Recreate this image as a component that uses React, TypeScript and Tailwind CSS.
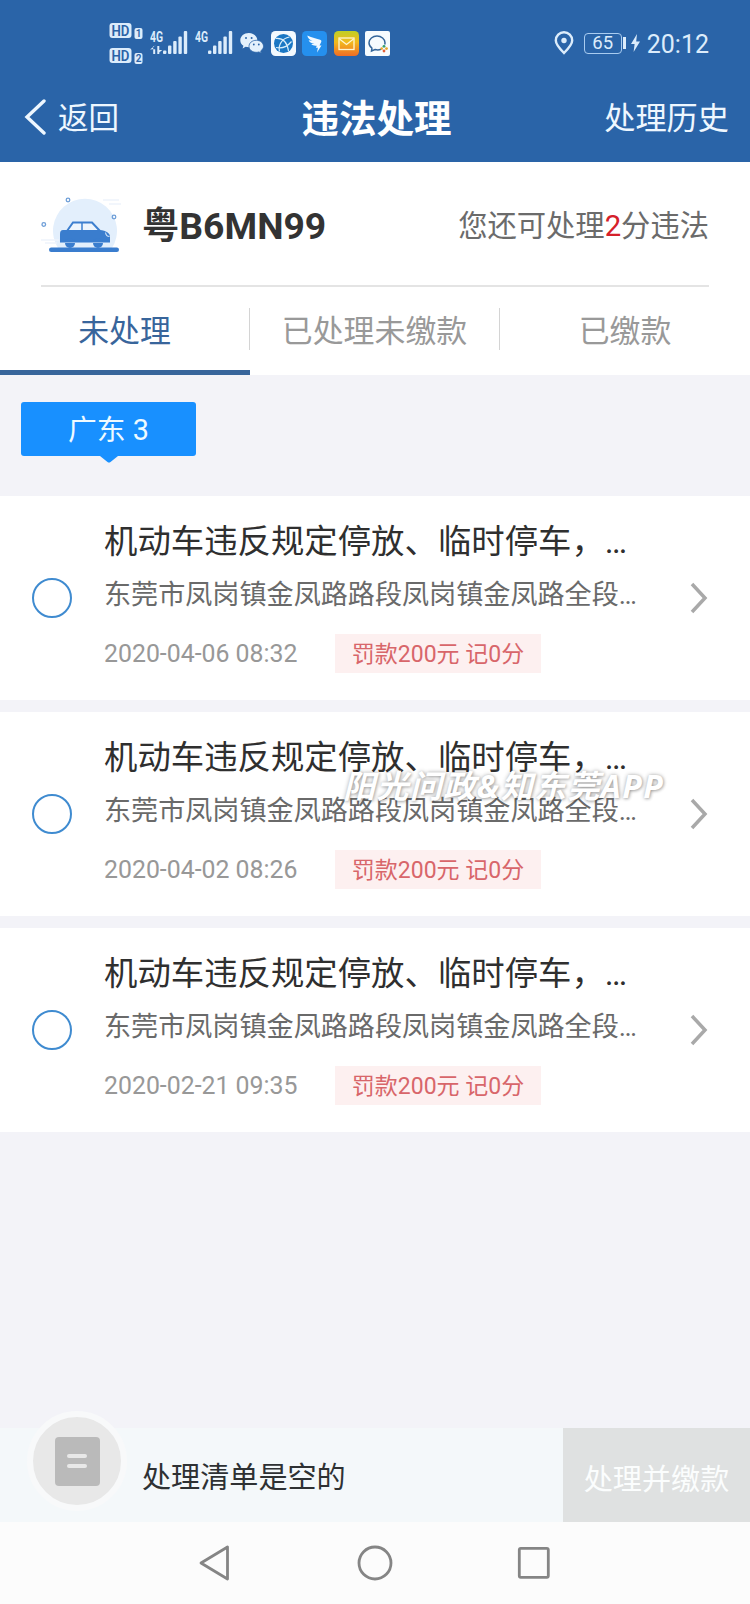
import React from "react";

const violations = [
  { id: 1, time: "2020-04-06 08:32" },
  { id: 2, time: "2020-04-02 08:26", watermark: true },
  { id: 3, time: "2020-02-21 09:35" },
];

const tabs = [
  { name: "未处理", active: true },
  { name: "已处理未缴款", active: false },
  { name: "已缴款", active: false },
];

function HdBadge({ sim }: { sim: string }) {
  return (
    <svg width="34" height="16" viewBox="0 0 34 16" fontFamily="Roboto, sans-serif" fontWeight="600">
      <rect x="0.500" y="0" width="22" height="15" rx="3" fill="#dcecfb" />
      <text x="2.500" y="12.600" fontSize="14.500" textLength="18" lengthAdjust="spacingAndGlyphs" fill="#2b62a6">
        HD
      </text>
      <rect x="25.500" y="5" width="8" height="11" rx="2" fill="#dcecfb" />
      <text x="26.800" y="14" fontSize="10" fill="#2b62a6">
        {sim}
      </text>
    </svg>
  );
}

function Signal({ data }: { data?: boolean }) {
  return (
    <svg width="38" height="26" viewBox="0 0 38 26" fill="#dcecfb">
      <text
        x="0"
        y="11.5"
        fontSize="14"
        fontWeight="700"
        fontFamily="Roboto, sans-serif"
        textLength="13"
        lengthAdjust="spacingAndGlyphs"
      >
        4G
      </text>
      {data && <path d="M3.200 16v8h2v-8zM0 19.500 5.200 15.500v3.500zM7.300 16v8h2v-8zM7.300 24l5-4H7.300z" />}
      <rect x="13" y="20.500" width="3.400" height="3.500" rx="1" />
      <rect x="18" y="15.500" width="3.400" height="8.500" rx="1" />
      <rect x="23.200" y="11" width="3.400" height="13" rx="1" />
      <rect x="28.400" y="6.500" width="3.400" height="17.500" rx="1" />
      <rect x="33.800" y="1" width="3.400" height="23" rx="1" />
    </svg>
  );
}

function WechatIcon() {
  return (
    <svg width="24" height="20" viewBox="0 0 24 20" fill="#e4f1fc">
      <path d="M8.800 0C4 0 .3 3.200.3 7.200c0 2.300 1.200 4.200 3.100 5.500l-.8 2.700 3-1.600c1 .3 2 .5 3.200.5 4.800 0 8.500-3.200 8.500-7.100S13.600 0 8.800 0z" />
      <path
        d="M16.300 7.300c-4.200 0-7.300 2.700-7.300 6s3.100 6 7.300 6c.9 0 1.800-.1 2.600-.4l2.500 1.300-.7-2.300c1.700-1.100 2.800-2.700 2.800-4.600 0-3.300-3-6-7.200-6z"
        stroke="#2b64a8"
        strokeWidth=".8"
      />
      <g fill="#2b64a8">
        <circle cx="6" cy="5" r="1" />
        <circle cx="11.600" cy="5" r="1" />
        <circle cx="13.800" cy="11.500" r=".9" />
        <circle cx="18.800" cy="11.500" r=".9" />
      </g>
    </svg>
  );
}

function BrowserIcon() {
  return (
    <svg width="25" height="25" viewBox="0 0 25 25" fill="none">
      <rect width="25" height="25" rx="4.500" fill="#f3f9fe" />
      <circle cx="12.500" cy="12.500" r="9.500" fill="#1a77c4" />
      <g stroke="#d9eefb" strokeWidth="1.200">
        <path d="M5 7.500c6-.5 11 3 12.500 12.500M8.500 20.500c-1.500-6 2-13 10-14.500M5 16.500c6 1.500 11-.5 15.500-6" />
      </g>
    </svg>
  );
}

function DingIcon() {
  return (
    <svg width="25" height="25" viewBox="0 0 25 25">
      <rect width="25" height="25" rx="4.500" fill="#2590ee" />
      <path
        d="M5.300 4.500c3.600 1.900 8.200 2.700 12.800 4.300 1.400.5 1.500 1.400 1 2.500l-1.600 3.200h2l-4.500 7 .9-4.800h-2l.9-2c-2.300.4-4.300-.3-5.600-1.600l3.200-.4C9 12.200 7.300 11 6.700 9.200l3.800.9C7.500 8.700 5.700 7.200 5.300 4.500z"
        fill="#f2f9ff"
      />
    </svg>
  );
}

function MailIcon() {
  return (
    <svg width="25" height="25" viewBox="0 0 25 25" fill="none">
      <defs>
        <linearGradient id="mail" x1="0" y1="0" x2="0" y2="1">
          <stop offset="0" stopColor="#bfd025" />
          <stop offset=".45" stopColor="#f2b91e" />
          <stop offset="1" stopColor="#ee6c25" />
        </linearGradient>
      </defs>
      <rect width="25" height="25" rx="4.500" fill="url(#mail)" />
      <rect x="5" y="7" width="15" height="11.500" stroke="#fff6cf" strokeWidth="1.300" />
      <path d="m5.500 8 7 5.500 7-5.500" stroke="#fff6cf" strokeWidth="1.300" />
    </svg>
  );
}

function ChatIcon() {
  return (
    <svg width="25" height="25" viewBox="0 0 25 25" fill="none">
      <rect width="25" height="25" rx="2" fill="#f6fbfe" />
      <path
        d="M16 18.200c-1.800.8-3.800.9-6 .3L6.500 20l.4-3C5 15.600 4 13.800 4 11.700 4 8 7.700 5 12 5s8 3 8 6.700c0 .8-.1 1.300-.3 1.900"
        stroke="#33659a"
        strokeWidth="1.500"
      />
      <circle cx="19" cy="15.300" r="1.400" fill="#35a070" />
      <circle cx="21.500" cy="17.600" r="1.400" fill="#e9a62c" />
      <circle cx="19" cy="20" r="1.400" fill="#e2603a" />
      <circle cx="16.700" cy="17.600" r="1.300" fill="#e9a62c" />
    </svg>
  );
}

function StatusBar() {
  return (
    <div className="flex h-[72px] items-center pl-[109px] pr-[41px] pt-[14px] text-[#dcecfb]">
      <div className="flex flex-col gap-[9px]">
        <HdBadge sim="1" />
        <HdBadge sim="2" />
      </div>
      <div className="ml-[7px] flex items-center">
        <Signal data />
        <div className="ml-[7px]">
          <Signal />
        </div>
      </div>
      <div className="ml-[7px] flex items-center gap-[6.500px]">
        <WechatIcon />
        <BrowserIcon />
        <DingIcon />
        <MailIcon />
        <ChatIcon />
      </div>
      <svg width="20" height="24" viewBox="0 0 20 24" fill="none" className="ml-auto">
        <path d="M10 22C5 17 1.800 13 1.800 9.500a8.200 8.200 0 0 1 16.400 0C18.200 13 15 17 10 22z" stroke="currentColor" strokeWidth="2.400" />
        <circle cx="10" cy="9.500" r="2.700" fill="currentColor" />
      </svg>
      <div className="ml-[10px] flex h-[21px] w-[38px] items-center justify-center rounded-[4px] border border-[#a9ccf0] text-[18.500px] leading-none">
        65
      </div>
      <div className="ml-px h-[12px] w-[3px] bg-[#dcecfb]" />
      <svg width="9" height="18" viewBox="0 0 9 18" fill="currentColor" className="ml-[5px]">
        <path d="M6 0 0 10h3.600L2.600 18 9 7.500H5.200z" />
      </svg>
      <span className="ml-[7px] pt-[3px] text-[25px] leading-none">20:12</span>
    </div>
  );
}

function CarIcon() {
  return (
    <svg width="82" height="60" viewBox="0 0 82 60" fill="none">
      <path d="M17 54A32 32 0 1 1 71 54z" fill="#e3effc" />
      <path d="M0 46h18M4 49h12M62 6h16M68 10h12" stroke="#eef4fc" strokeWidth="1.500" />
      <g stroke="#6f9fd8" strokeWidth="1.300">
        <circle cx="2.800" cy="30.500" r="1.800" />
        <circle cx="27" cy="6" r="1.800" />
        <circle cx="73" cy="23" r="1.800" />
      </g>
      <path d="M26 37 32 28.500h19l8 8.500" stroke="#3d7fcf" strokeWidth="2" fill="#eef5fd" />
      <path d="M41 29v8" stroke="#3d7fcf" strokeWidth="1.500" />
      <path d="M22 36h37c6 .5 10 3 10 7v5H19v-8c0-2.500 1-4 3-4z" fill="#3a7dce" />
      <path d="M64.500 38.500c.5 3 2 4 4 4" stroke="#cfe2f7" strokeWidth="1.200" />
      <circle cx="29" cy="49" r="5" fill="#3a7dce" />
      <circle cx="57" cy="49" r="5" fill="#3a7dce" />
      <path d="M19 48.500h50" stroke="#8bb4e6" strokeWidth="1" />
      <rect x="8" y="53.500" width="70" height="4.500" rx="2.200" fill="#3a7dce" />
    </svg>
  );
}

function ViolationCard({ time, watermark }: { time: string; watermark?: boolean }) {
  return (
    <li className="relative flex h-[204px] items-center bg-white pl-[32px] pr-[42px]">
      <span className="-mt-px size-[40px] shrink-0 rounded-full border-2 border-[#3f8bd0]" />
      <div className="ml-[32px] h-full w-[560px] whitespace-nowrap">
        <p className="mt-[23px] text-[33.400px] leading-[46px] text-[#2f2f2f]">机动车违反规定停放、临时停车，…</p>
        <p className="mt-[10px] text-[27.100px] leading-[40px] text-[#6a6a6a]">东莞市凤岗镇金凤路路段凤岗镇金凤路全段…</p>
        <div className="mt-[18px] flex items-center">
          <span className="w-[231px] pt-[2px] text-[24.850px] leading-[38px] text-[#989898]">{time}</span>
          <span className="flex h-[39px] w-[206px] items-center justify-center bg-[#fdf0f0] pt-[2px] text-[23px] leading-none text-[#d8666a]">
            罚款200元 记0分
          </span>
        </div>
      </div>
      <svg width="18" height="32" viewBox="0 0 18 32" fill="none" className="ml-auto">
        <path d="m2 2 13 14L2 30" stroke="#a9a9a9" strokeWidth="3.500" />
      </svg>
      {watermark && (
        <span className="absolute left-[343px] top-[51px] whitespace-nowrap font-['Open_Sans','Noto_Sans_CJK_SC',sans-serif] text-[32px] font-bold italic leading-[46px] tracking-[1.400px] text-white [text-shadow:0_0_4px_rgba(0,0,0,0.3),1px_1px_3px_rgba(0,0,0,0.22)]">
          阳光问政&amp;知东莞APP
        </span>
      )}
    </li>
  );
}

export default function App() {
  return (
    <div className="flex h-[1604px] w-[750px] flex-col overflow-hidden bg-[#f3f3f8] font-['Roboto','Noto_Sans_CJK_SC',sans-serif]">
      <header className="h-[162px] shrink-0 bg-[#2a64a8] text-white">
        <StatusBar />
        <div className="flex h-[90px] items-center pl-[24px] pr-[21px]">
          <div className="flex flex-1 items-center">
            <svg width="22" height="36" viewBox="0 0 22 36" fill="none">
              <path d="M20 2 3 18 20 34" stroke="#eef7ff" strokeWidth="3.400" strokeLinecap="round" />
            </svg>
            <span className="ml-[12px] pt-[4px] text-[30.500px] text-[#eef7ff]">返回</span>
          </div>
          <h1 className="pt-[5px] text-[37.500px] font-bold">违法处理</h1>
          <div className="flex-1 pt-[4px] text-right text-[31.200px] text-[#eef7ff]">处理历史</div>
        </div>
      </header>

      <section className="shrink-0 bg-white">
        <div className="mx-[41px] flex h-[125px] items-center border-b-2 border-[#e4e4e4]">
          <CarIcon />
          <span className="ml-[19px] pt-[6px] text-[37.300px] font-bold text-[#333]">粤B6MN99</span>
          <span className="ml-auto pt-[6px] text-[29.300px] text-[#6b6b6b]">
            您还可处理<span className="text-[#d5202a]">2</span>分违法
          </span>
        </div>
        <nav className="flex h-[88px]">
          {tabs.map((tab, i) => (
            <div key={tab.name} className="flex flex-1 flex-col">
              <div className="flex h-[83px] items-center">
                <span
                  className={
                    "flex-1 pt-[7px] text-center text-[30.900px] " + (tab.active ? "text-[#38659b]" : "text-[#999]")
                  }
                >
                  {tab.name}
                </span>
                {i < tabs.length - 1 && <span className="h-[42px] w-px bg-[#d4d4d4]" />}
              </div>
              {tab.active && <div className="h-[5px] bg-[#38659b]" />}
            </div>
          ))}
        </nav>
      </section>

      <div className="h-[121px] shrink-0 pl-[21px] pt-[27px]">
        <div className="flex w-[175px] flex-col items-center">
          <div className="flex h-[54px] w-full items-center justify-center rounded-[3px] bg-[#1890ff] pt-[3px] text-[28.800px] leading-none text-[#eefaff]">
            广东 3
          </div>
          <svg width="20" height="7" viewBox="0 0 20 7">
            <path d="M1 0h18l-7.500 6q-1.500 1-3 0z" fill="#1890ff" />
          </svg>
        </div>
      </div>

      <ul className="flex flex-col gap-[12px]">
        {violations.map((item) => (
          <ViolationCard key={item.id} time={item.time} watermark={item.watermark} />
        ))}
      </ul>

      <footer className="mt-auto shrink-0">
        <div className="flex h-[94px] bg-[#f4f8fa]">
          <div className="-mt-[17px] ml-[27px] flex size-[100px] items-center justify-center rounded-full border-[6px] border-[#f8f9fa] bg-[#e8e8e8]">
            <div className="flex h-[49px] w-[45px] flex-col items-center justify-center gap-[6px] rounded-[4px] bg-[#bababa]">
              <span className="h-[4px] w-[20px] rounded-full bg-[#e8e8e8]" />
              <span className="h-[4px] w-[20px] rounded-full bg-[#e8e8e8]" />
            </div>
          </div>
          <span className="ml-[15px] pt-[4px] text-[29.100px] leading-[92px] text-[#2e3133]">处理清单是空的</span>
          <button
            type="button"
            className="ml-auto w-[187px] bg-[#dfe1e1] pt-[11px] text-[29.100px] text-[#fbfdfd]"
          >
            处理并缴款
          </button>
        </div>
        <div className="flex h-[82px] items-center bg-[#fcfcfc] pl-[198px]">
          <svg width="34" height="38" viewBox="0 0 34 38" fill="none" stroke="#858585" strokeWidth="2.800" strokeLinejoin="round">
            <path d="M29.500 3v32L3 19z" />
          </svg>
          <svg width="38" height="38" viewBox="0 0 38 38" fill="none" stroke="#858585" strokeWidth="2.800" className="ml-[124px]">
            <circle cx="19" cy="19" r="16" />
          </svg>
          <svg width="34" height="34" viewBox="0 0 34 34" fill="none" stroke="#858585" strokeWidth="2.800" className="ml-[123px]">
            <rect x="2.300" y="2.300" width="29" height="29" rx="1.500" />
          </svg>
        </div>
      </footer>
    </div>
  );
}
